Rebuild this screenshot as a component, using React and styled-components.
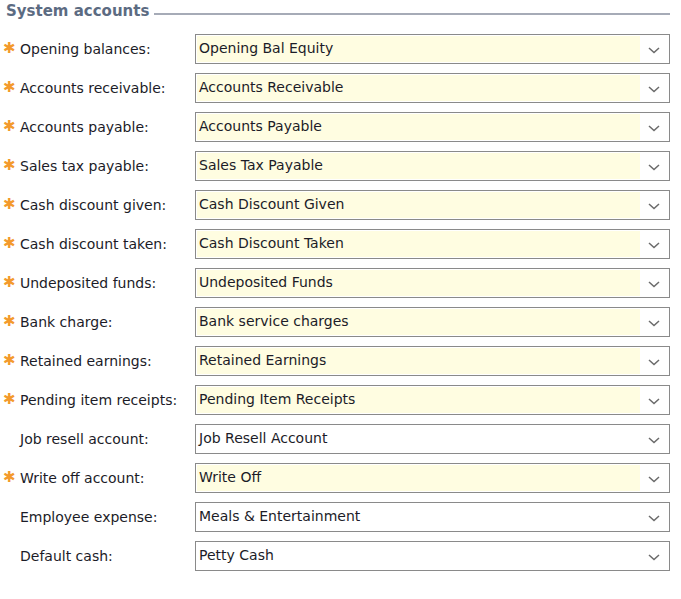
import React from "react";
import styled, { createGlobalStyle } from "styled-components";

const GlobalStyle = createGlobalStyle`
  html, body {
    margin: 0;
    padding: 0;
    background: #ffffff;
  }
  body {
    font-family: "DejaVu Sans", Verdana, sans-serif;
  }
`;

const accounts = [
  { label: "Opening balances:", value: "Opening Bal Equity", required: true },
  { label: "Accounts receivable:", value: "Accounts Receivable", required: true },
  { label: "Accounts payable:", value: "Accounts Payable", required: true },
  { label: "Sales tax payable:", value: "Sales Tax Payable", required: true },
  { label: "Cash discount given:", value: "Cash Discount Given", required: true },
  { label: "Cash discount taken:", value: "Cash Discount Taken", required: true },
  { label: "Undeposited funds:", value: "Undeposited Funds", required: true },
  { label: "Bank charge:", value: "Bank service charges", required: true },
  { label: "Retained earnings:", value: "Retained Earnings", required: true },
  { label: "Pending item receipts:", value: "Pending Item Receipts", required: true },
  { label: "Job resell account:", value: "Job Resell Account", required: false },
  { label: "Write off account:", value: "Write Off", required: true },
  { label: "Employee expense:", value: "Meals & Entertainment", required: false },
  { label: "Default cash:", value: "Petty Cash", required: false },
];

const Chevron = () => (
  <svg width="12" height="7" viewBox="0 0 12 7">
    <path d="M1 1 L6 5.5 L11 1" fill="none" stroke="#6b6b6b" strokeWidth="1.5" />
  </svg>
);

const App = () => {
  return (
    <Panel>
      <GlobalStyle />
      <Legend>
        <LegendText>System accounts</LegendText>
        <LegendLine />
      </Legend>
      <Rows>
        {accounts.map((a) => (
          <Row key={a.label}>
            <Star>{a.required ? "✱" : ""}</Star>
            <Label>{a.label}</Label>
            <Select>
              <SelectValue $required={a.required}>{a.value}</SelectValue>
              <SelectArrow>
                <Chevron />
              </SelectArrow>
            </Select>
          </Row>
        ))}
      </Rows>
    </Panel>
  );
};

export default App;

export const Panel = styled.div`
  width: 681px;
  height: 599px;
  padding: 0 11px 0 6px;
  box-sizing: border-box;
`;

export const Legend = styled.div`
  display: flex;
  align-items: center;
  height: 24px;
  gap: 5px;
`;

export const LegendText = styled.span`
  font-family: "DejaVu Sans", Verdana, sans-serif;
  font-weight: bold;
  font-size: 15px;
  color: #5c6b82;
  margin-top: -3px;
`;

export const LegendLine = styled.div`
  flex: 1;
  height: 2px;
  background: #a6abb7;
  margin-top: 4px;
`;

export const Rows = styled.div`
  display: flex;
  flex-direction: column;
  gap: 9px;
  margin-top: 10px;
`;

export const Row = styled.div`
  display: flex;
  align-items: center;
  height: 30px;
`;

export const Star = styled.span`
  width: 14px;
  font-size: 15px;
  color: #f39a2c;
  font-weight: bold;
  margin-left: -3px;
  margin-right: 3px;
  margin-top: -2px;
`;

export const Label = styled.span`
  width: 175px;
  font-size: 14px;
  color: #1c1c28;
`;

export const Select = styled.div`
  display: flex;
  align-items: stretch;
  width: 475px;
  height: 30px;
  box-sizing: border-box;
  border: 1px solid #8a8a8a;
  padding: 1px;
  background: #ffffff;
`;

export const SelectValue = styled.div`
  flex: 1;
  display: flex;
  align-items: center;
  padding-left: 2px;
  padding-bottom: 2px;
  font-size: 14px;
  color: #1c1c28;
  background: ${(p) => (p.$required ? "#fffde1" : "#ffffff")};
`;

export const SelectArrow = styled.div`
  width: 28px;
  display: flex;
  align-items: center;
  justify-content: center;
  padding-top: 2px;
`;
